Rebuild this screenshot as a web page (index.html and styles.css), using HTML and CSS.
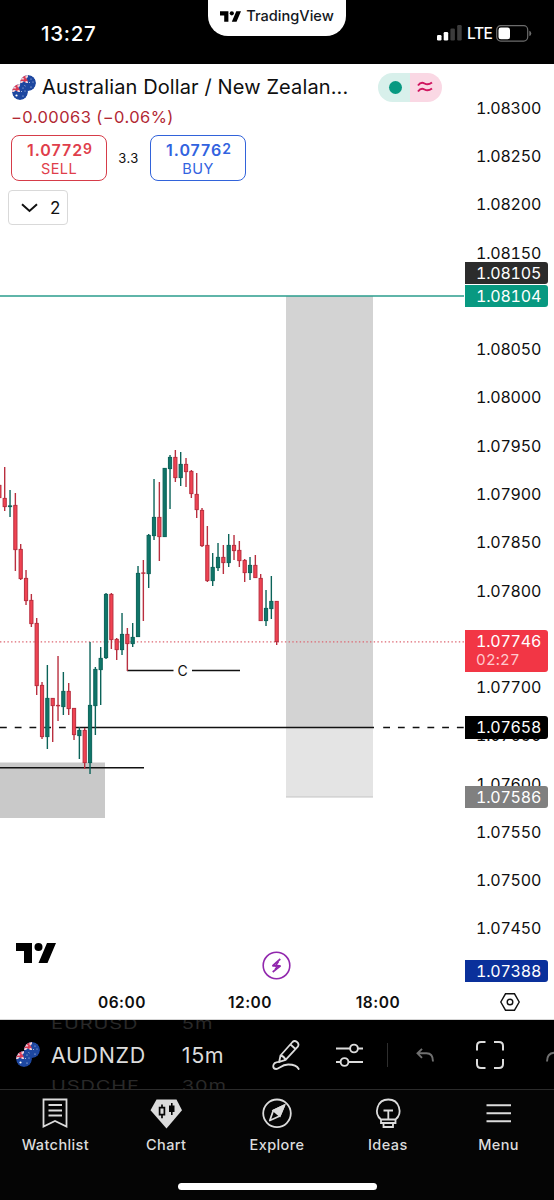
FILE: index.html
```html
<!DOCTYPE html>
<html lang="en">
<head>
  <meta charset="UTF-8" />
  <meta name="viewport" content="width=device-width, initial-scale=1" />
  <title>AUDNZD 15m - TradingView</title>
  <link rel="stylesheet" href="styles.css">
</head>
<body>

  <svg class="defs" width="0" height="0">
    <symbol id="tv" viewBox="0 0 40 20">
      <path d="M0 0h16v20H8V8H0z M31 0h9l-8.500 20h-9z" />
      <circle cx="22.500" cy="4" r="4" />
    </symbol>
    <symbol id="flag" viewBox="0 0 16 16">
      <clipPath id="round"><circle cx="8" cy="8" r="8" /></clipPath>
      <g clip-path="url(#round)">
        <rect width="16" height="16" fill="#1d47a0" />
        <path d="M0 0h8v2L6 4l2 3v1H6L4 6 2 8H0z" fill="#f0cdd6" />
        <path d="M0 4V2l2-2h1l4.500 5v1.500L1.500 1.500zM0 4.500h7v1.500H0zM4 0h1.500v7H4z" fill="#d93a55" />
        <circle cx="4.500" cy="11.500" r="1.100" fill="#fff" />
        <circle cx="11" cy="4" r=".5" fill="#dfe6f5" />
        <circle cx="13" cy="7" r=".5" fill="#dfe6f5" />
        <circle cx="9.500" cy="7.500" r=".5" fill="#dfe6f5" />
        <circle cx="11" cy="12" r=".6" fill="#dfe6f5" />
      </g>
    </symbol>
  </svg>

  <header class="status">
    <div class="clock">13:27</div>
    <div class="island">
      <svg class="island-logo" width="21" height="11"><use href="#tv" /></svg>
      <span>TradingView</span>
    </div>
    <div class="signal">
      <svg width="25" height="16" viewBox="0 0 25 16">
        <rect x="0" y="10" width="4.500" height="5.500" rx="1.200" fill="#fff" />
        <rect x="6.700" y="7" width="4.500" height="8.500" rx="1.200" fill="#fff" />
        <rect x="13.400" y="3.500" width="4.500" height="12" rx="1.200" fill="#3c3c3c" />
        <rect x="20.200" y="0" width="4.500" height="15.500" rx="1.200" fill="#3c3c3c" />
      </svg>
      <span class="lte">LTE</span>
      <svg width="36" height="17" viewBox="0 0 36 17">
        <rect x=".7" y=".7" width="31" height="15.400" rx="4" fill="none" stroke="#6c6c6c" stroke-width="1.200" />
        <rect x="2.500" y="2.500" width="11.500" height="11.800" rx="2.400" fill="#fff" />
        <path d="M33.300 5.800q2 .6 2 2.600t-2 2.600z" fill="#6c6c6c" />
      </svg>
    </div>
  </header>

  <main class="chart">
    <section class="pane">
      <svg class="plot" width="464" height="956" viewBox="0 64 464 956">
        <rect x="0" y="762.500" width="105" height="55.500" fill="#c9c9c9" />
        <rect x="286" y="296" width="87" height="431" fill="#d3d3d3" />
        <rect x="286" y="727" width="87" height="70" fill="#e4e4e4" />
        <path d="M286 797h87" stroke="#c4c4c4" />
        <path d="M0 296h464" stroke="#2a9d8c" stroke-width="1.400" />
        <path d="M0 727.500h75" stroke="#111" stroke-width="1.400" stroke-dasharray="6.800 7.940" />
        <path d="M383.200 727.500h81" stroke="#111" stroke-width="1.400" stroke-dasharray="6.800 7.940" />
        <path d="M75 727.500h299M0 767.700h144M127 670.500h46.500M192 670.500h48" stroke="#111" stroke-width="1.400" />
        <path d="M0 641.800h464" stroke="#dd6570" stroke-width="1.300" stroke-dasharray="1.400 2.300" />
        <g id="candles"></g>
        <text class="mark" x="182.500" y="675.500" text-anchor="middle">C</text>
        <g transform="translate(276.500 965.500)" fill="none" stroke="#9127ad">
          <circle r="13.300" stroke-width="1.600" />
          <path d="M3.800-6.500-4 .3H4L-3.800 6.500" stroke-width="1.700" stroke-linejoin="bevel" />
          <path d="M2-4-1.500 1M2-.5-1.500 4" stroke-width="1.500" />
        </g>
      </svg>

      <div class="legend">
        <div class="symbol-row">
          <span class="pair">
            <svg class="flag-back" width="16" height="16"><use href="#flag" /></svg>
            <svg class="flag-front" width="16" height="16"><use href="#flag" /></svg>
          </span>
          <span class="symbol-name">Australian Dollar / New Zealan...</span>
          <span class="market">
            <span class="market-open"><i class="dot"></i></span>
            <span class="market-approx">
              <svg width="16" height="12" viewBox="0 0 16 12" fill="none" stroke="#d01760" stroke-width="2">
                <path d="M1 4.500Q4 .5 7.500 2.500T15 1.500M1 10.500Q4 6.500 7.500 8.500T15 7.500" />
              </svg>
            </span>
          </span>
        </div>
        <div class="change">−0.00063 (−0.06%)</div>
        <div class="trade">
          <button class="quote sell"><b>1.0772<sup>9</sup></b><span>SELL</span></button>
          <span class="spread">3.3</span>
          <button class="quote buy"><b>1.0776<sup>2</sup></b><span>BUY</span></button>
        </div>
        <button class="collapse">
          <svg width="17" height="10" viewBox="0 0 17 10" fill="none" stroke="#111" stroke-width="2">
            <path d="M1 1.200l7.500 6.800L16 1.200" />
          </svg>
          <span>2</span>
        </button>
      </div>

      <svg class="watermark" width="40" height="20"><use href="#tv" /></svg>

      <div class="times">
        <span>06:00</span>
        <span>12:00</span>
        <span>18:00</span>
      </div>
    </section>

    <aside class="scale">
      <ol class="prices">
        <li>1.08300</li>
        <li>1.08250</li>
        <li>1.08200</li>
        <li>1.08150</li>
        <li></li>
        <li>1.08050</li>
        <li>1.08000</li>
        <li>1.07950</li>
        <li>1.07900</li>
        <li>1.07850</li>
        <li>1.07800</li>
        <li></li>
        <li>1.07700</li>
        <li>1.07650</li>
        <li>1.07600</li>
        <li>1.07550</li>
        <li>1.07500</li>
        <li>1.07450</li>
      </ol>
      <div class="tag tag-high">1.08105</div>
      <div class="tag tag-target">1.08104</div>
      <div class="tag tag-last">1.07746<small>02:27</small></div>
      <div class="tag tag-entry">1.07658</div>
      <div class="tag tag-stop">1.07586</div>
      <div class="tag tag-low">1.07388</div>
      <svg class="settings" width="20" height="18" viewBox="0 0 20 18" fill="none" stroke="#111" stroke-width="1.400">
        <path d="M5.500 .8h9L19.200 9l-4.700 8.200h-9L.8 9z" />
        <circle cx="10" cy="9" r="2.800" />
      </svg>
    </aside>
  </main>

  <nav class="toolbar">
    <span class="pair">
      <svg class="flag-back" width="16" height="16"><use href="#flag" /></svg>
      <svg class="flag-front" width="16" height="16"><use href="#flag" /></svg>
    </span>
    <div class="wheel wheel-symbol">
      <span class="ghost">EURUSD</span>
      <span class="picked">AUDNZD</span>
      <span class="ghost">USDCHF</span>
    </div>
    <div class="wheel wheel-interval">
      <span class="ghost">5m</span>
      <span class="picked">15m</span>
      <span class="ghost">30m</span>
    </div>
    <svg class="tool draw" width="28" height="32" viewBox="0 0 28 32" fill="none" stroke="#dcdcdc" stroke-width="1.800" stroke-linejoin="round" stroke-linecap="round">
      <path d="M7.200 22.800L8.500 16.500 20.500 3q2-2 4.500 0t.8 4.700L13.600 20.800z M8.500 16.500q3.500.5 5.100 4.300M18.500 5.500l5 4.500" />
      <path d="M7.200 22.800Q1.500 23 1.200 27q0 3 3 3c3 0 5-4.500 12-4.500 6 0 9 1.500 10.500 4.500" />
    </svg>
    <svg class="tool sliders" width="27" height="24" viewBox="0 0 27 24" fill="none" stroke="#dcdcdc" stroke-width="1.900">
      <path d="M0 5.500h14M22 5.500h5M0 19h4.500M12.500 19H27" />
      <circle cx="18" cy="5.500" r="3.900" />
      <circle cx="8.500" cy="19" r="3.900" />
    </svg>
    <i class="divider"></i>
    <svg class="tool undo" width="18" height="14" viewBox="0 0 18 14" fill="none" stroke="#707070" stroke-width="1.900">
      <path d="M6 .8L1.500 5.300 6 9.800M1.500 5.300h9q6.500 0 6.500 8.200" />
    </svg>
    <svg class="tool full" width="28" height="28" viewBox="0 0 28 28" fill="none" stroke="#dcdcdc" stroke-width="2">
      <path d="M1 9.500V5q0-4 4-4h4.500M18 1h5q4 0 4 4v4.500M27 18v5q0 4-4 4h-5M9.500 27H5q-4 0-4-4v-5" />
    </svg>
    <svg class="tool redo" width="8" height="14" viewBox="0 0 8 14" fill="none" stroke="#707070" stroke-width="1.900">
      <path d="M1 13.500Q1 5.300 8 4.800" />
    </svg>
  </nav>

  <footer class="tabs">
    <a class="tab">
      <svg width="32" height="32" viewBox="0 0 32 32" fill="none" stroke="#dcdcdc" stroke-width="1.800">
        <path d="M4.500 2.500h23v27L16 24 4.500 29.500zM9.500 8h13.500M9.500 13.500h13.500M9.500 18.500h13.500" />
      </svg>
      <span>Watchlist</span>
    </a>
    <a class="tab">
      <svg width="32" height="32" viewBox="0 0 32 32">
        <path d="M6.500 2.500h20L32 13.300 16.500 31.500.5 13.300z" fill="#dcdcdc" />
        <path d="M9.600 10.700h4.800v7H9.600zM12 7.500v3.200M12 17.700v3.500" fill="none" stroke="#050505" stroke-width="1.700" />
        <path d="M19 8.500h5.500v6.500H19zM21 6h1.600V18H21z" fill="#050505" />
      </svg>
      <span>Chart</span>
    </a>
    <a class="tab">
      <svg width="32" height="32" viewBox="0 0 32 32" fill="none" stroke="#dcdcdc" stroke-width="1.800">
        <circle cx="16" cy="16.300" r="13.800" />
        <path d="M8.800 23.500L12.300 13.500l11-5.200-4.500 10.700z" stroke-linejoin="round" />
        <path d="M12.300 13.500l11-5.200-4.500 10.700z" fill="#dcdcdc" />
      </svg>
      <span>Explore</span>
    </a>
    <a class="tab">
      <svg width="32" height="32" viewBox="0 0 32 32" fill="none" stroke="#dcdcdc" stroke-width="1.800">
        <path d="M9 22.500C1.500 16.500 5 2.500 16.300 2.500S31 16.500 23.500 22.500zM11.500 13.500h9.500M16.300 13.500v9M9 22.500v3.500h14.500v-3.500M11.500 26v4h9.500v-4" />
      </svg>
      <span>Ideas</span>
    </a>
    <a class="tab">
      <svg width="32" height="32" viewBox="0 0 32 32" fill="none" stroke="#dcdcdc" stroke-width="1.900">
        <path d="M3.500 8.300H28M3.500 16.300H28M3.500 24.300H28" />
      </svg>
      <span>Menu</span>
    </a>
    <i class="home-bar"></i>
  </footer>

  <script>
    // high, body top, body bottom, low, up (1) / down (0)
    const bars = [
      [484, 485, 498, 498, 0],
      [467, 498, 507, 511, 0], [490, 505.500, 507, 517, 1], [493, 505, 550, 571, 0], [544, 549, 579, 580, 0],
      [570, 578, 601, 605, 0], [594, 600, 624, 627, 0], [618, 623, 686, 695, 0], [682, 685, 737, 739, 0],
      [665, 698, 737, 749, 1], [698, 698, 706, 742, 0], [656, 705, 706, 721, 0], [672, 691, 707, 715, 1],
      [683, 691, 709, 715, 0], [708, 708, 735, 740, 0], [727, 730, 736, 759, 1], [728, 730, 763, 769, 0],
      [642, 705, 763, 774, 1], [667, 669, 706, 735, 1], [647, 658, 670, 705, 1], [593, 594, 658, 659, 1],
      [593, 594, 640, 649, 0], [638, 639, 650, 660, 0], [613, 634, 650, 655, 1], [628, 634, 644, 671, 0],
      [623, 637, 644, 647, 1], [566, 573, 637, 637, 1], [560, 572.500, 573.500, 621, 0], [534, 535, 574, 588, 1],
      [479, 517, 536, 540, 1], [482, 517, 537, 561, 0], [468, 468, 537, 537, 1], [455, 457, 469, 509, 1],
      [450, 457, 478, 482, 0], [452, 464, 478, 486, 1], [458, 464, 472, 487, 0], [470, 471, 494, 498, 0],
      [473, 494, 510, 518, 0], [508, 510, 546, 547, 0], [526, 545, 581, 582, 0], [553, 567, 581, 586, 1],
      [543, 557, 568, 571, 1], [545, 557, 563, 574, 0], [534, 545, 563, 567, 1], [535, 545, 551, 560, 0],
      [541, 550, 561, 567, 0], [559, 560, 573, 582, 0], [557, 565, 573, 580, 1], [555, 565, 578, 578, 0],
      [574, 578, 621, 621, 0], [590, 608, 621, 626, 1], [576, 601, 609, 619, 1], [601, 601, 642, 645, 0]
    ];
    const step = 5.333;

    document.getElementById('candles').innerHTML = bars.map(([high, top, bottom, low, up], i) => {
      const x = 4.700 + (i - 1) * step;
      const body = Math.max(bottom - top - 0.8, 0.4);
      return `<g class="${up ? 'up' : 'down'}">
        <path d="M${x} ${high}V${low}" />
        <rect x="${x - 1.600}" y="${top + 0.4}" width="3.200" height="${body}" />
      </g>`;
    }).join('');
  </script>
</body>
</html>
```
FILE: styles.css
```css
* {
  box-sizing: border-box;
}
body {
  margin: 0;
  width: 554px;
  height: 1200px;
  overflow: hidden;
  display: flex;
  flex-direction: column;
  font-family: Inter, "Liberation Sans", sans-serif;
  background: #000;
  color: #0f0f0f;
}
svg {
  display: block;
  flex-shrink: 0;
}
.defs {
  position: absolute;
}

/* status bar */
.status {
  height: 64px;
  flex-shrink: 0;
  display: grid;
  grid-template-columns: 208px 138px 208px;
  color: #fff;
}
.clock {
  padding: 21px 0 0 41px;
  font-size: 20.5px;
  line-height: 25px;
  font-weight: 500;
  letter-spacing: 0.7px;
}
.island {
  height: 36px;
  display: flex;
  justify-content: center;
  gap: 5px;
  padding-top: 8px;
  background: #fff;
  border-radius: 0 0 20px 20px;
  color: #131722;
  font-size: 14.6px;
  line-height: 17px;
  font-weight: 500;
}
.island-logo {
  margin-top: 3px;
}
.signal {
  display: flex;
  align-items: flex-start;
  padding: 25px 0 0 91px;
}
.lte {
  width: 24px;
  margin: 0 5px 0 5px;
  font-size: 15.5px;
  line-height: 18px;
  font-weight: 500;
  letter-spacing: -0.4px;
}

/* chart */
.chart {
  height: 956px;
  flex-shrink: 0;
  display: grid;
  grid-template-columns: 464px 90px;
  background: #fff;
  border-bottom: 1px solid #d5d5d5;
}
.pane {
  position: relative;
  height: 956px;
}
.plot {
  position: absolute;
  top: 0;
  left: 0;
}
.mark {
  font-size: 14px;
  fill: #111;
}
.up {
  fill: #0f7569;
  stroke: #0b6359;
}
.down {
  fill: #f04352;
  stroke: #b92f3f;
}
.up path,
.down path {
  stroke-width: 1.4;
}
.up rect,
.down rect {
  stroke-width: 1;
}
.legend {
  position: absolute;
  top: 0;
  left: 0;
  padding: 8px 0 0 11px;
}
.symbol-row {
  display: flex;
  align-items: center;
  height: 30px;
}
.pair {
  position: relative;
  width: 25px;
  height: 25px;
  flex-shrink: 0;
}
.flag-back,
.flag-front {
  position: absolute;
  border-radius: 50%;
}
.flag-back {
  top: 0;
  right: 0;
}
.flag-front {
  left: 1px;
  bottom: 0;
}
.symbol-name {
  width: 336px;
  padding-left: 6px;
  font-size: 20px;
  letter-spacing: 0.12px;
  white-space: nowrap;
}
.market {
  display: flex;
  width: 64px;
  height: 29px;
  margin-left: 6px;
  border-radius: 15px;
  overflow: hidden;
}
.market-open,
.market-approx {
  flex: 1;
  display: flex;
  align-items: center;
  justify-content: center;
}
.market-open {
  padding-left: 2px;
  background: #d8f0eb;
}
.market-approx {
  padding-right: 2px;
  background: #fad8e4;
}
.dot {
  width: 13px;
  height: 13px;
  border-radius: 50%;
  background: #089981;
}
.change {
  height: 30px;
  font-size: 16.5px;
  line-height: 30px;
  letter-spacing: 0.42px;
  color: #b22833;
}
.trade {
  display: flex;
  align-items: center;
  margin-top: 3px;
}
.quote {
  width: 96px;
  height: 46px;
  padding: 0;
  display: flex;
  flex-direction: column;
  align-items: center;
  background: #fff;
  border-radius: 8px;
  font-family: inherit;
  font-size: 14.5px;
  line-height: 18px;
  letter-spacing: 0.4px;
}
.quote b {
  margin-top: 5px;
  padding-left: 2px;
  font-size: 16px;
  line-height: 19px;
  font-weight: 600;
  letter-spacing: 0.95px;
}
.quote sup {
  font-size: 14px;
  line-height: 0;
  vertical-align: 2px;
}
.sell {
  border: 1.5px solid #d63c49;
  color: #e03e4b;
}
.buy {
  border: 1.5px solid #3263da;
  color: #3263e0;
}
.spread {
  width: 43px;
  text-align: center;
  font-size: 13px;
  letter-spacing: 0.5px;
}
.collapse {
  display: flex;
  align-items: center;
  gap: 13px;
  width: 60px;
  height: 35px;
  margin: 9px 0 0 -3px;
  padding: 0 0 0 12px;
  background: #fff;
  border: 1px solid #d9d9d9;
  border-radius: 4px;
  font-family: inherit;
  font-size: 17px;
  color: #111;
}
.collapse span {
  margin-left: -1px;
}
.watermark {
  position: absolute;
  left: 16px;
  top: 879px;
  color: #111;
}
.times {
  position: absolute;
  left: 58px;
  bottom: 7px;
  display: flex;
  font-size: 15.5px;
  line-height: 20px;
  font-weight: 600;
  letter-spacing: 0.5px;
}
.times span {
  width: 128px;
  text-align: center;
}

/* price scale */
.scale {
  position: relative;
  font-size: 16px;
  font-variant-numeric: tabular-nums;
  letter-spacing: -0.2px;
}
.prices {
  margin: 0;
  padding: 19.700px 0 0 12px;
  list-style: none;
}
.prices li {
  height: 48.29px;
  line-height: 48.29px;
}
.tag {
  position: absolute;
  left: 1px;
  width: 83px;
  height: 22px;
  padding-left: 11px;
  border-radius: 0 3px 3px 0;
  line-height: 22px;
  color: #fff;
}
.tag small {
  display: block;
  font-size: 15px;
  line-height: 16px;
  letter-spacing: 0.2px;
  color: #ffc9cd;
}
.tag-high {
  top: 198px;
  background: #2c2c2c;
}
.tag-target {
  top: 221px;
  background: #089981;
}
.tag-last {
  top: 566px;
  height: 42px;
  background: #f23645;
}
.tag-entry {
  top: 652px;
  height: 23px;
  background: #000;
}
.tag-stop {
  top: 722px;
  background: #808080;
}
.tag-low {
  top: 896px;
  background: #0a309b;
}
.settings {
  position: absolute;
  left: 36px;
  bottom: 9px;
}

/* chart toolbar */
.toolbar {
  height: 70px;
  flex-shrink: 0;
  display: flex;
  align-items: center;
  padding-left: 15px;
  overflow: hidden;
  border-bottom: 1px solid #2b2b2b;
}
.wheel {
  height: 70px;
  display: flex;
  flex-direction: column;
  justify-content: center;
  color: #dcdcdc;
  font-size: 21.5px;
}
.wheel-symbol {
  width: 132px;
  margin-left: 11px;
}
.wheel-interval {
  width: 91px;
}
.picked {
  height: 42px;
  line-height: 42px;
  letter-spacing: 0.6px;
}
.ghost {
  height: 20px;
  font-size: 20px;
  line-height: 20px;
  letter-spacing: 0.9px;
  color: #292929;
  transform: scaleY(0.75);
}
.sliders {
  margin-left: 36px;
}
.divider {
  width: 1px;
  height: 24px;
  margin: 0 28px 0 24px;
  background: #2e2e2e;
}
.full {
  margin-left: 42px;
}
.redo {
  margin-left: 42px;
}

/* bottom tabs */
.tabs {
  position: relative;
  height: 110px;
  flex-shrink: 0;
  display: grid;
  grid-template-columns: repeat(5, 1fr);
  background: #050505;
}
.tab {
  display: flex;
  flex-direction: column;
  align-items: center;
  padding-top: 7px;
  color: #dcdcdc;
  font-size: 14.5px;
  line-height: 18px;
  font-weight: 500;
  letter-spacing: 0.4px;
}
.tab span {
  margin-top: 7px;
}
.home-bar {
  position: absolute;
  left: 178px;
  bottom: 10px;
  width: 199px;
  height: 7px;
  border-radius: 4px;
  background: #fff;
}
```
